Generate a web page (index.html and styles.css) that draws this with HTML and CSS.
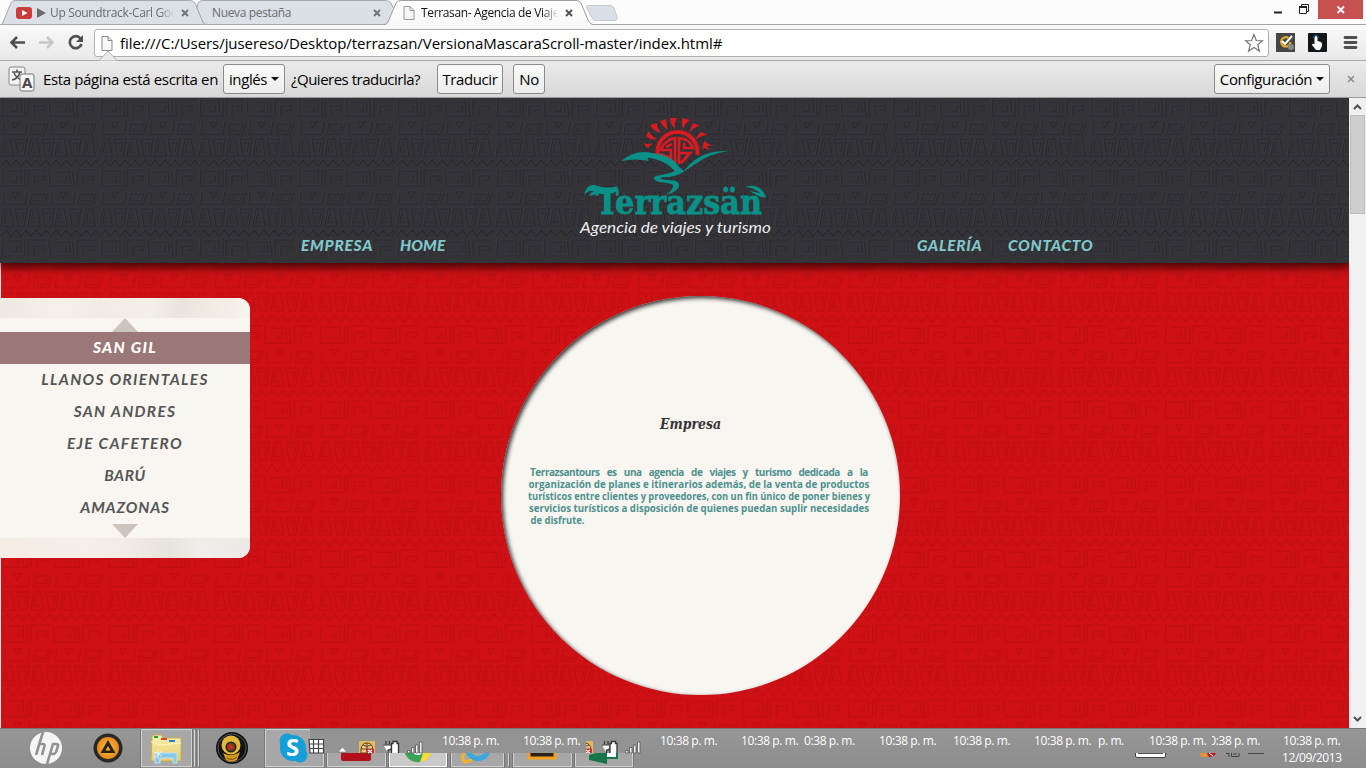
FILE: index.html
```html
<!DOCTYPE html>
<html lang="es">
<head>
<meta charset="utf-8">
<title>Terrasan- Agencia de Viajes</title>
<link rel="stylesheet" href="styles.css">
</head>
<body>
<div class="window">
  <div class="tabstrip">
    <svg class="tabshapes" width="1366" height="26">
      <defs><linearGradient id="act" x2="0" y2="1"><stop offset="0" stop-color="#fff"/><stop offset="1" stop-color="#f7f7f7"/></linearGradient></defs>
      <path d="M0 24.5H1366" stroke="#a3a3a3"/>
      <path d="M2 24.500L11 3Q12 .5 15 .5H190Q193 .5 195 3L203 22Q204 24.500 207 24.500Z" fill="#dae0e6" stroke="#a6a9ad"/>
      <path d="M198 3Q199 .5 203 .5H385Q389 .5 391 3L397 16L390 24.500H207Q204 24.500 203 22L197 8Z" fill="#dae0e6" stroke="#a6a9ad"/>
      <path d="M384 25.500Q387 24.500 388 22L396 3Q397 .5 401 .5H576Q580 .5 581 3L588 20Q590 24.500 593 24.500V26H384Z" fill="url(#act)"/>
      <path d="M384 24.500Q387 24.500 388 22L396 3Q397 .5 401 .5H576Q580 .5 581 3L588 20Q590 24.500 593 24.500" fill="none" stroke="#a0a0a0"/>
      <path d="M588 5.500H610Q613 5.500 614 8L617 17Q618 20.500 614 20.500H597Q593 20.500 592 18L587 8Q586 5.500 588 5.500Z" fill="#d8dfe6" stroke="#c5c8cc"/>
    </svg>
    <div class="tab t1">
      <svg width="16" height="12"><rect width="16" height="12" rx="3" fill="#cb3c3c"/><path d="M6 3L11.500 6L6 9Z" fill="#fff"/></svg>
      <svg class="play" width="9" height="10"><path d="M0 0L9 5L0 10Z" fill="#6c6c6c"/></svg>
      <span class="tt fade">Up Soundtrack-Carl Goe</span>
      <svg class="x" width="8" height="8"><path d="M1 1L7 7M7 1L1 7" stroke="#707070" stroke-width="1.800"/></svg>
    </div>
    <div class="tab t2">
      <span class="tt">Nueva pestaña</span>
      <svg class="x" width="8" height="8"><path d="M1 1L7 7M7 1L1 7" stroke="#707070" stroke-width="1.800"/></svg>
    </div>
    <div class="tab t3">
      <svg width="12" height="14"><path d="M1 .5H7L11 4.500V13.500H1ZM7 .5V4.500H11" fill="#f5f5f5" stroke="#999"/></svg>
      <span class="tt fade">Terrasan- Agencia de Viajes</span>
      <svg class="x" width="8" height="8"><path d="M1 1L7 7M7 1L1 7" stroke="#505050" stroke-width="1.800"/></svg>
    </div>
    <svg class="winctl" width="106" height="19"><path d="M14 12.500H22" stroke="#222" stroke-width="2"/><path d="M39.500 6.500H46.500V13.500H39.500ZM41.500 6V4.500H48.500V11.500H47" fill="none" stroke="#222"/><path d="M39 7H47" stroke="#222" stroke-width="2"/><rect x="58" width="45" height="19" fill="#c75050"/><path d="M77.500 6.500L84 13M84 6.500L77.500 13" stroke="#fff" stroke-width="1.800"/></svg>
  </div>
  <div class="toolbar">
    <svg class="navicons" width="94" height="35"><path d="M25 17.500H12M17 12L11.500 17.500L17 23" fill="none" stroke="#505050" stroke-width="2.600"/><path d="M39 17.500H52M47 12L52.500 17.500L47 23" fill="none" stroke="#c6c6c6" stroke-width="2.600"/><path d="M80.500 13.500A6 6 0 1 0 81.500 19" fill="none" stroke="#505050" stroke-width="2.700"/><path d="M83 10V17H76Z" fill="#505050"/></svg>
    <div class="omnibox">
      <svg width="12" height="15"><path d="M1 .5H7L11 4.500V14.500H1ZM7 .5V4.500H11" fill="#f8f8f8" stroke="#888"/></svg>
      <span class="url">file:///C:/Users/jusereso/Desktop/terrazsan/VersionaMascaraScroll-master/index.html#</span>
      <svg width="20" height="20" viewBox="0 0 20 20"><path d="M10 1.500L12.300 7.500L18.500 7.800L13.700 11.700L15.400 18L10 14.400L4.600 18L6.300 11.700L1.500 7.800L7.700 7.500Z" fill="#fff" stroke="#777" stroke-width="1.200"/></svg>
    </div>
    <svg width="96" height="35"><rect x="7" y="8" width="19" height="19" fill="#454545"/><path d="M19.500 13A4.700 4.700 0 1 0 21.500 17" fill="none" stroke="#e3a62d" stroke-width="2.300"/><path d="M13 16L16 19L23 11" fill="none" stroke="#fff" stroke-width="2"/><circle cx="22" cy="22" r="3" fill="#888"/>
    <rect x="39" y="8" width="19" height="19" rx="1" fill="#111618"/><path d="M47 11Q48.500 11 48.500 13V16L52 17Q53.500 18 53 21L51 25H47L43 20Q43 18 45.500 19V13Q45.500 11 47 11Z" fill="#fff"/><path d="M44 13Q47 7 50 13" stroke="#176883" fill="none"/>
    <path d="M76 12.500H87M76 17.500H87M76 22.500H87" stroke="#505050" stroke-width="2.800" stroke-linecap="round"/></svg>
  </div>
  <div class="infobar">
    <svg class="notch" width="20" height="11"><path d="M1 10.500L10 1L19 10.500" fill="#eaeaea" stroke="#b0b0b0"/></svg>
    <svg class="tricon" width="28" height="27"><rect x="1" y="1" width="16" height="18" rx="2" fill="#f3f3f3" stroke="#888"/><path d="M4 6H14M9 3.500V6M12 6Q10 13 4 14M6 7Q9 13 14 14" fill="none" stroke="#555" stroke-width="1.600"/><rect x="12" y="8" width="14" height="17" rx="2" fill="#f5f5f5" stroke="#777"/><text x="14" y="21.500" class="atext">A</text></svg>
    <span class="it w1">Esta página está escrita en</span>
    <span class="btn b1">inglés<i></i></span>
    <span class="it w2">¿Quieres traducirla?</span>
    <span class="btn b2">Traducir</span>
    <span class="btn b3">No</span>
    <span class="btn b4">Configuración<i></i></span>
    <svg class="ix" width="8" height="8"><path d="M1 1L7 7M7 1L1 7" stroke="#888" stroke-width="1.500"/></svg>
  </div>
  <div class="viewport">
    <div class="page">
      <svg class="redbg" width="1349" height="630">
        <defs>
          <g id="motifs">
            <path d="M3 1L2 18H25V1M21 15V3L6 3M11 13H17V7M28 19V2H47M34 18V8H44V12H38M50 17L49 2M49 18H74L72 3M70 15L69 4H54M60 13H66V7M77 19V2H96M83 18V8H93V12H87"/>
            <path d="M4 24L3 36H25L27 24M12 24L15 30L19 24ZM32 25L30 36H44L48 25M32 26H45L42 33H34V30M52 24L51 36H73L75 24M60 24L63 30L67 24ZM80 25L78 36H92L96 25M80 26H93L90 33H82V30"/>
            <path d="M4 41H10L13 58H1ZM6 44L4 54H10M15 41H27L24 58H18ZM18 45H24L22 54M31 41H37L40 58H28ZM33 44L31 54H37M42 41H54L51 58H45ZM45 45H51L49 54M58 41H64L67 58H55ZM60 44L58 54H64M69 41H81L78 58H72ZM72 45H78L76 54M86 41H92L95 58H83ZM88 44L86 54H92"/>
            <path d="M1 68L6 62L11 68L16 62L21 68L26 62L31 68L36 62L41 68L46 62L51 68L56 62L61 68L66 62L71 68L76 62L81 68L86 62L91 68L96 62L98 66"/>
          </g>
          <pattern id="pr" width="99" height="70" patternUnits="userSpaceOnUse" patternTransform="translate(1 2) scale(1.067)"><g fill="none"><use href="#motifs" stroke="#b90d12" stroke-width="1.300"/></g></pattern>
          <pattern id="pd" width="99" height="70" patternUnits="userSpaceOnUse"><g fill="none"><use href="#motifs" stroke="#3b3a3f" transform="translate(-1 -1)"/><use href="#motifs" stroke="#29292d" stroke-width="1.200"/></g></pattern>
        </defs>
        <rect width="1349" height="630" fill="#cf1115"/><rect width="1349" height="630" fill="url(#pr)" opacity=".7"/>
        <path d="M.5 0V630" stroke="#e8dede"/>
      </svg>
      <header class="header">
        <svg class="darkbg" width="1349" height="165"><rect width="1349" height="165" fill="#343338"/><rect width="1349" height="165" fill="url(#pd)" opacity=".8"/></svg>
        <nav class="nav left"><a class="n1">EMPRESA</a><a class="n2">HOME</a></nav>
        <svg class="logo" width="230" height="140" viewBox="0 0 230 140">
          <path d="M100 16L106 14Q106 19 108 25Q102 21 100 16ZM110 13H117Q114 18 115 24Q110 19 110 13ZM122 13L130 15Q125 18 123 24Q121 19 122 13ZM133 18L140 21Q133 22 130 28Q130 23 133 18ZM141 27L148 30Q141 30 136 35Q137 30 141 27ZM144 36L152 41Q147 40 142 44ZM143 39L151 45L143 43ZM97 18Q97 23 101 28Q93 26 90 20ZM89 26Q91 31 97 34Q91 36 86 31ZM84 38Q88 40 93 38L88 43Q85 42 84 38Z" fill="#d91a20"/>
          <path d="M97.500 51V47A20 20 0 0 1 137.500 47V50" fill="none" stroke="#d91a20" stroke-width="4"/>
          <path d="M100 49L111 53V45H101Q102 39 111 34L115 33V61M106 42L112 39M119 59V33Q130 34 133 43H124V38M119 48H130L121 58" fill="none" stroke="#d91a20" stroke-width="2.700"/>
          <path d="M61 56Q76 44 92 48Q112 50 119 62L124 66L130 59Q145 45 168 46Q149 49 137 58L123 67Q114 73 103 72Q96 74 108 75Q118 75 119 79Q120 86 106 90Q114 84 113 80Q110 78 99 77Q90 74 96 71Q112 68 115 66Q106 56 91 53Q85 52 89 56Q75 53 61 56Z" fill="#099087"/>
          <path d="M24 90Q27 77 38 81Q48 84 58 81L54 88Q43 91 35 87Q29 84 24 90ZM29 91Q32 84 41 88ZM206 92Q200 77 185 82Q193 82 200 88L190 86Q201 94 206 92Z" fill="#099087"/>
          <text x="36" y="109" class="brand" textLength="166" lengthAdjust="spacingAndGlyphs">Terrazsän</text>
          <text x="20" y="128" class="tag" textLength="191" lengthAdjust="spacingAndGlyphs">Agencia de viajes y turismo</text>
        </svg>
        <nav class="nav right"><a class="n3">GALERÍA</a><a class="n4">CONTACTO</a></nav>
      </header>
      <main class="main">
        <aside class="side">
          <div class="paper"></div>
          <div class="up"></div>
          <ul class="list"><li class="sel">SAN GIL</li><li class="s2">LLANOS ORIENTALES</li><li class="s3">SAN ANDRES</li><li class="s4">EJE CAFETERO</li><li class="s5">BARÚ</li><li class="s6">AMAZONAS</li></ul>
          <div class="down"></div>
          <div class="paper bottom"></div>
        </aside>
        <section class="circle">
          <svg width="399" height="399" viewBox="501 296 399 399">
            <text x="660" y="429" class="h" textLength="61" lengthAdjust="spacingAndGlyphs">Empresa</text>
            <g class="para">
              <text x="530" y="476" class="wide" textLength="338">Terrazsantours es una agencia de viajes y turismo dedicada a la</text>
              <text x="528.500" y="488" textLength="341" lengthAdjust="spacingAndGlyphs">organización de planes e itinerarios además, de la venta de productos</text>
              <text x="528" y="500" textLength="342" lengthAdjust="spacingAndGlyphs">turísticos entre clientes y proveedores, con un fin único de poner bienes y</text>
              <text x="529" y="512" textLength="340" lengthAdjust="spacingAndGlyphs">servicios turísticos a disposición de quienes puedan suplir necesidades</text>
              <text x="530.500" y="524" textLength="54" lengthAdjust="spacingAndGlyphs">de disfrute.</text>
            </g>
          </svg>
        </section>
      </main>
    </div>
    <div class="scroll"><svg width="17" height="630"><rect width="17" height="630" fill="#f0f0f0"/><path d="M5 11L8.500 7.500L12 11" fill="none" stroke="#505050" stroke-width="2"/><rect x="1.500" y="17.500" width="14" height="98" fill="#cdcdcd" stroke="#bdbdbd"/><path d="M5 619L8.500 622.500L12 619" fill="none" stroke="#505050" stroke-width="2"/></svg></div>
  </div>
  <footer class="taskbar">
    <svg class="icons" width="1366" height="40">
      <defs><radialGradient id="or"><stop offset="0" stop-color="#ffc446"/><stop offset="1" stop-color="#e6871b"/></radialGradient><linearGradient id="fo" x2="0" y2="1"><stop offset="0" stop-color="#fbf1b0"/><stop offset="1" stop-color="#e7cb6c"/></linearGradient></defs>
      <g fill="#a7a7a7" stroke="#d0d0d0"><rect x="141.500" y="1.500" width="50" height="37"/><path d="M194.500 1.500V38.500M198.500 1.500V38.500"/><rect x="265.500" y="1.500" width="58" height="37"/><rect x="327.500" y="1.500" width="58" height="37"/><rect x="389.500" y="1.500" width="57" height="37" fill="#c9c9c9" stroke="#fff"/><rect x="451.500" y="1.500" width="52" height="37"/><path d="M508.500 1.500V38.500"/><rect x="513.500" y="1.500" width="58" height="37"/><rect x="575.500" y="1.500" width="57" height="37"/></g>
      <g fill="none" stroke="#777"><path d="M140.500 0V40M192.500 0V40M196.500 0V40M199.500 0V40M264.500 0V40M324.500 0V40M326.500 0V40M386.500 0V40M388.500 0V40M447.500 0V40M450.500 0V40M504.500 0V40M509.500 0V40M512.500 0V40M572.500 0V40M574.500 0V40M633.500 0V40"/></g>
      <circle cx="46" cy="20" r="16" fill="#f5f5f5"/><path d="M43 4L36 27M39 16H43Q45 16 44.500 18L42 27M47 36L53 16H56Q58.500 16 58 18L56 24Q55 26 53 26H50" fill="none" stroke="#929292" stroke-width="2.600"/>
      <circle cx="108" cy="20" r="14.500" fill="#282828"/><circle cx="108" cy="20" r="11" fill="url(#or)"/><path d="M108 12L100.500 25H115.500Z" fill="#292313"/><path d="M108 18L105.500 22.500H110.500Z" fill="#f5ab31"/>
      <path d="M152 9Q152 7 154 7H161L163 10H181V33H151Z" fill="url(#fo)" stroke="#c7ac55"/><path d="M154 9H158" stroke="#1c9d3f" stroke-width="2"/><path d="M161 11H167" stroke="#d34830" stroke-width="2"/><path d="M169 13H175" stroke="#287fd0" stroke-width="2"/><path d="M151 14L160 17L181 15" stroke="#fff5c5" fill="none"/><path d="M155 35V25H177V35H173V30H160V35Z" fill="#86c8e8" stroke="#b9e4f5"/><path d="M154 24L162 28M158 22V31M154 30L162 23" stroke="#fff" opacity=".7"/>
      <circle cx="232" cy="20" r="16" fill="#121212"/><circle cx="232" cy="20" r="14" fill="none" stroke="#555"/><circle cx="231" cy="17" r="9.500" fill="#e3b93c"/><path d="M223 25Q232 30 240 24L237 32Q231 35 226 32Z" fill="#d69c21"/><path d="M227 30Q232 33 237 29" fill="none" stroke="#6e4509"/><circle cx="231" cy="19" r="5.500" fill="#242424"/><circle cx="231" cy="19" r="4" fill="#5e4a18"/><circle cx="230.500" cy="19" r="2.500" fill="#e52020"/>
      <circle cx="293" cy="20" r="13" fill="#149fd9"/><circle cx="287" cy="13" r="7.500" fill="#149fd9"/><circle cx="300" cy="27" r="7.500" fill="#149fd9"/><text x="286" y="28" class="skype">S</text>
      <rect x="341" y="21" width="30" height="12" rx="2" fill="#b20e1b"/><circle cx="418" cy="20" r="14" fill="#d4a420"/><path d="M404 20A14 14 0 0 0 420 34L427 22Z" fill="#39a257"/><path d="M420 34A14 14 0 0 0 432 20H425Z" fill="#ffdb35"/><circle cx="418" cy="20" r="6" fill="#397cc0" stroke="#fff" stroke-width="2"/>
      <circle cx="478" cy="20" r="10.500" fill="none" stroke="#38a8df" stroke-width="5"/><path d="M465 23Q460 33 466 34L472 32" fill="none" stroke="#efb52d" stroke-width="3"/><rect x="529" y="10" width="26" height="20" fill="#2b211c" stroke="#f2a321" stroke-width="3"/><path d="M589 27L607 22V36L589 32Z" fill="#17754a"/><path d="M607 24H617V30H607" fill="#fff" stroke="#17754a" stroke-width="2"/>
      <rect x="310" y="1" width="330" height="24" fill="#939393"/>
      <path d="M309 11.500H323.500V25H310ZM310 16H323M310 20.500H323M313.500 12V25M318.500 12V25" fill="#fff" stroke="#444" stroke-width="1.200"/>
      <path d="M338 24L342.500 19L347 24Z" fill="#fff" stroke="#666" stroke-width=".6"/>
      <g id="globe"><rect x="359" y="13" width="16" height="12" fill="#e7b761"/><path d="M361 25V21Q362 15 367 15T373 21V25Z" fill="#e8c991" stroke="#694116"/><path d="M367 15V25M361 21H373M363 17Q367 20 371 17" stroke="#694116" fill="none"/><path d="M366 21H374V25H367Z" fill="#d72424"/><path d="M368 22L372 25M372 22L368 25" stroke="#fff" stroke-width="1.300"/></g>
      <g id="power"><path d="M386 13V16M389.500 13V16M383.500 17H391.500V20Q391 22 388 22V25" fill="#fff" stroke="#333" stroke-width="1.200"/><path d="M391.500 25V15.500H393V13.500H397V15.500H398.500V25" fill="#fff" stroke="#333" stroke-width="1.300"/></g>
      <g id="signal" fill="#eee" stroke="#555" stroke-width=".8"><path d="M407.500 25V22.500H410V25ZM411.500 25V19.500H414V25ZM415.500 25V17H418V25ZM419.500 25V14H422V25Z"/></g>
      <svg x="586" y="0" width="7" height="25" viewBox="368 0 7 25"><use href="#globe"/></svg><use href="#power" x="218.500"/><use href="#signal" x="218"/>
      <path d="M1135.500 25V28Q1135.500 29.500 1137 29.500H1164Q1165.500 29.500 1165.500 28V25" fill="#fff" stroke="#444"/><path d="M1138 25.500H1163" stroke="#555"/><path d="M1200 25H1207V29H1201Z" fill="#e7902d"/><path d="M1207 25H1216Q1214 29 1209 29Z" fill="#b91515"/><path d="M1209 25L1213 28" stroke="#fff"/><path d="M1226 25.500H1229M1229 25V29M1231.500 25V28.500H1239V25M1233 26H1237M1248 25.500H1264" fill="none" stroke="#444"/>
    </svg>
    <div class="clocks">
      <span class="c1">10:38 p. m.</span><span class="c2">10:38 p. m.</span><span class="c3">10:38 p. m.</span><span class="c4">10:38 p. m.</span><span class="c5">0:38 p. m.</span><span class="c6">10:38 p. m.</span><span class="c7">10:38 p. m.</span><span class="c8">10:38 p. m.</span><span class="c9">p. m.</span><span class="c10">10:38 p. m.</span><span class="c11">0:38 p. m.</span><span class="c12">10:38 p. m.</span>
      <span class="date">12/09/2013</span>
    </div>
  </footer>
</div>
</body>
</html>
```
FILE: styles.css
```css
* { box-sizing: border-box; }
body { margin: 0; overflow: hidden; font-family: "Open Sans", "Noto Sans", sans-serif; }
svg { display: block; flex: none; }
.window { width: 1366px; height: 768px; display: flex; flex-direction: column; background: #fbfbfb; }
.tabstrip { position: relative; height: 25px; display: flex; flex: none; }
.tabshapes { position: absolute; left: 0; top: 0; }
.tab { position: relative; display: flex; align-items: center; height: 25px; font-size: 12px; letter-spacing: -.35px; color: #6c6c6c; white-space: nowrap; }
.t1 { width: 198px; padding-left: 16px; }
.t2 { width: 194px; padding-left: 14px; }
.t3 { width: 190px; padding-left: 11px; color: #111; }
.play { margin: 0 4px 0 5px; }
.tt { flex: 1; overflow: hidden; margin-right: 7px; }
.t3 .tt { margin-left: 6px; }
.fade { -webkit-mask-image: linear-gradient(90deg, #000 88%, transparent); mask-image: linear-gradient(90deg, #000 88%, transparent); }
.x { margin-right: 9px; }
.t2 .x { margin-right: 11px; }
.winctl { margin-left: auto; position: relative; }
.toolbar { height: 36px; flex: none; display: flex; background: linear-gradient(#f9f9f9, #e9e9e9); border-bottom: 1px solid #a8a8a8; }
.omnibox { width: 1175px; height: 28px; margin-top: 4px; border: 1px solid #b0b0b0; border-radius: 3px; background: #fff; display: flex; align-items: center; padding: 0 4px 0 6px; }
.url { flex: 1; font-size: 15px; letter-spacing: -.06px; margin-left: 7px; line-height: 20px; }
.infobar { position: relative; height: 37px; flex: none; display: flex; align-items: center; background: linear-gradient(#ebebeb, #d8d8d8); border-bottom: 1px solid #999; font-size: 15px; white-space: nowrap; }
.notch { position: absolute; left: 98px; top: -11px; }
.tricon { margin: 0 7px 0 8px; }
.atext { font: bold 15px "Open Sans", sans-serif; fill: #444; }
.it { letter-spacing: -.37px; }
.w1 { width: 180px; }
.w2 { width: 146px; letter-spacing: -.5px; }
.btn { height: 30px; border: 1px solid #8b8b8b; border-radius: 3px; background: linear-gradient(#fafafa, #ececec); display: flex; align-items: center; justify-content: center; letter-spacing: -.4px; }
.btn i { border: 4px solid transparent; border-top-color: #111; border-bottom: 0; margin-left: 4px; }
.b1 { width: 62px; margin-right: 6px; }
.b2 { width: 66px; margin-right: 10px; }
.b3 { width: 32px; }
.b4 { width: 116px; margin-left: auto; }
.ix { margin: 0 11px 0 17px; }
.viewport { height: 630px; flex: none; display: flex; }
.page { position: relative; width: 1349px; height: 630px; overflow: hidden; }
.redbg, .darkbg { position: absolute; left: 0; top: 0; }
.header { position: relative; height: 165px; display: flex; box-shadow: 0 3px 10px 1px rgba(0,0,0,.75); }
.nav { position: relative; display: flex; align-items: flex-end; padding-bottom: 7px; font: italic 900 15.5px/22px Lato, sans-serif; color: #81c8cc; white-space: nowrap; }
.left { width: 560px; padding-left: 301px; }
.right { padding-left: 127px; }
.n1 { width: 99px; letter-spacing: .75px; }
.n3 { width: 91px; letter-spacing: .7px; }
.n2 { letter-spacing: .1px; }
.n4 { letter-spacing: .75px; }
.logo { position: relative; margin-top: 7px; }
.brand { font: bold 33px "DejaVu Serif", serif; fill: #099087; stroke: #099087; stroke-width: .8px; }
.tag { font: italic 16px Lato, sans-serif; fill: #eee; }
.main { position: relative; display: flex; align-items: flex-start; padding-top: 33px; }
.side { width: 250px; height: 260px; margin-top: 2px; background: #f9f5f1; border-radius: 0 12px 12px 0; overflow: hidden; }
.paper { height: 20px; background: linear-gradient(100deg, #eee8e3, #f5f0ea 25%, #f1ebe6 40%, #f3efeb 60%, #e9e4df 72%, #f0ece3 84%, #f7f3ee); }
.bottom { background: linear-gradient(80deg, #f6ece3, #f4efeb 35%, #f1ece8 50%, #e7e3df 66%, #f0edea 80%, #ece8e6); }
.up { width: 0; margin: 0 auto; border: 13px solid transparent; border-top: 0; border-bottom: 14px solid #cdc4bc; }
.down { width: 0; margin: 0 auto; border: 13px solid transparent; border-bottom: 0; border-top: 14px solid #cdc4bc; }
.list { list-style: none; margin: 0; padding: 0; height: 192px; text-align: center; font: italic bold 15.5px/30px Lato, sans-serif; color: #555; letter-spacing: 1.3px; }
.list li { height: 32px; }
.list .sel { background: #9b7878; color: #fff; font-weight: 900; }
.list .s5 { letter-spacing: .6px; }
.list .s6 { letter-spacing: .8px; }
.circle { width: 399px; height: 399px; margin-left: 251px; border-radius: 50%; background: #f9f5f1; box-shadow: inset 2px 2px 4px #333; }
.h { font: italic bold 14px "DejaVu Serif", serif; fill: #333; }
.para { font: bold 10.5px "Open Sans", sans-serif; fill: #4c918e; }
.wide { font-size: 10px; letter-spacing: -.4px; word-spacing: 5px; }
.scroll { width: 17px; }
.taskbar { position: relative; height: 40px; flex: none; background: linear-gradient(#969696, #8d8d8d); border-top: 1px solid #777; }
.icons { position: absolute; left: 0; top: -1px; }
.skype { font: bold 24px "Open Sans", sans-serif; fill: #fff; }
.clocks span { position: absolute; top: 3px; width: 58px; height: 17px; overflow: hidden; color: #fff; font-size: 12px; line-height: 17px; letter-spacing: -.4px; white-space: nowrap; }
.clocks .c1 { left: 442px; } .clocks .c2 { left: 523px; } .clocks .c3 { left: 660px; } .clocks .c4 { left: 741px; }
.clocks .c5 { left: 804px; width: 52px; } .clocks .c6 { left: 879px; } .clocks .c7 { left: 953px; } .clocks .c8 { left: 1034px; }
.clocks .c9 { left: 1098px; width: 28px; } .clocks .c10 { left: 1149px; }
.clocks .c11 { left: 1212px; width: 48px; display: flex; justify-content: flex-end; } .clocks .c12 { left: 1283px; }
.clocks .date { left: 1282px; top: 20px; width: 60px; }
```
